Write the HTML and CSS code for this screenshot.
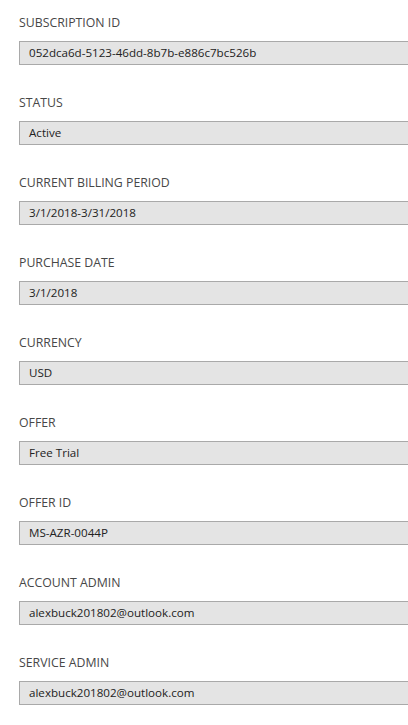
FILE: index.html
```html
<!DOCTYPE html>
<html>
<head>
<meta charset="utf-8">
<link rel="stylesheet" href="styles.css">
</head>
<body>
<div class="form">
  <div class="field"><div class="label">SUBSCRIPTION ID</div><div class="box">052dca6d-5123-46dd-8b7b-e886c7bc526b</div></div>
  <div class="field"><div class="label">STATUS</div><div class="box">Active</div></div>
  <div class="field"><div class="label">CURRENT BILLING PERIOD</div><div class="box">3/1/2018-3/31/2018</div></div>
  <div class="field"><div class="label">PURCHASE DATE</div><div class="box">3/1/2018</div></div>
  <div class="field"><div class="label">CURRENCY</div><div class="box">USD</div></div>
  <div class="field"><div class="label">OFFER</div><div class="box">Free Trial</div></div>
  <div class="field"><div class="label">OFFER ID</div><div class="box">MS-AZR-0044P</div></div>
  <div class="field"><div class="label">ACCOUNT ADMIN</div><div class="box">alexbuck201802@outlook.com</div></div>
  <div class="field"><div class="label">SERVICE ADMIN</div><div class="box">alexbuck201802@outlook.com</div></div>
</div>
</body>
</html>
```
FILE: styles.css
```css
html, body {
  margin: 0;
  padding: 0;
  background: #ffffff;
  overflow: hidden;
}
body {
  font-family: "Open Sans", "Noto Sans", sans-serif;
  color: #333333;
}
.form {
  display: flex;
  flex-direction: column;
  padding: 15px 0 0 19px;
}
.field {
  display: flex;
  flex-direction: column;
  height: 80px;
}
.label {
  font-size: 12.3px;
  line-height: 16px;
  height: 16px;
  color: #474747;
}
.box {
  margin-top: 10px;
  box-sizing: border-box;
  height: 24px;
  border: 1px solid #a9a9a9;
  border-right: none;
  background: #e4e4e4;
  padding-left: 9px;
  font-size: 11.6px;
  line-height: 22px;
  color: #222222;
  white-space: nowrap;
}
```
